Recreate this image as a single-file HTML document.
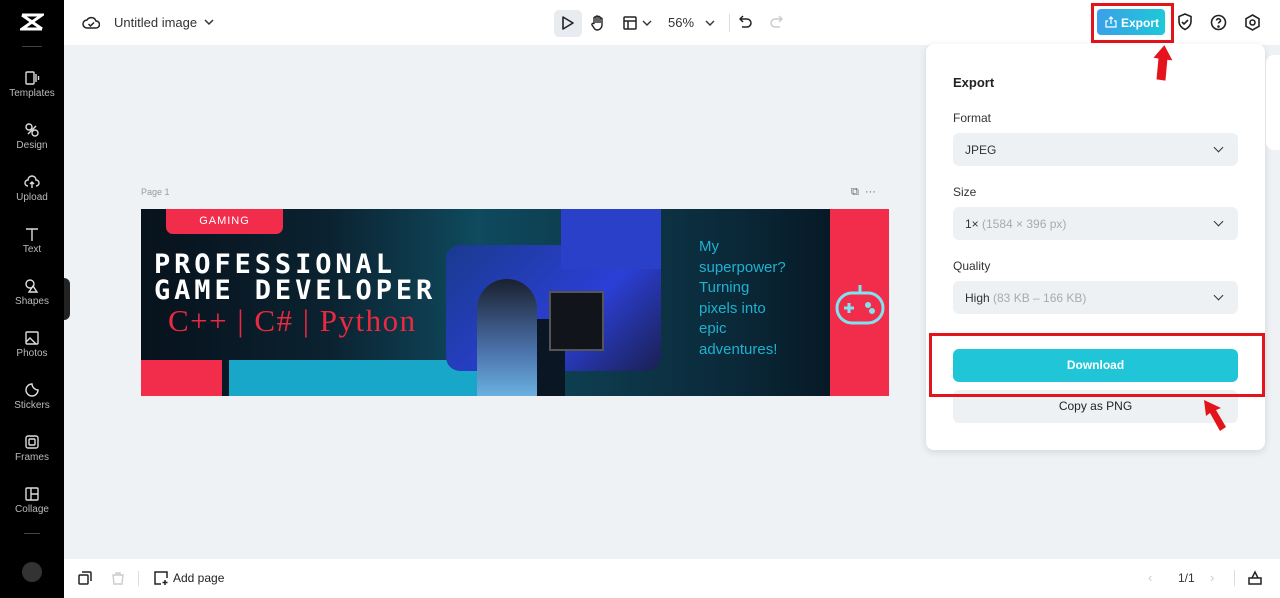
<!DOCTYPE html><html><head><meta charset="utf-8"><style>
*{box-sizing:border-box;margin:0;padding:0}
body{width:1280px;height:598px;overflow:hidden;background:#eff2f5;font-family:"Liberation Sans",sans-serif;position:relative;color:#222}
.a{position:absolute}
.side{left:0;top:0;width:64px;height:598px;background:#000}
.si{position:absolute;left:0;width:64px;text-align:center;color:#bbb;font-size:10px}
.si svg{display:block;margin:0 auto 2px}
.top{left:64px;top:0;width:1216px;height:45px;background:#fff}
.bot{left:64px;top:559px;width:1216px;height:39px;background:#fff}
.panel{left:926px;top:44px;width:339px;height:406px;background:#fff;border-radius:8px;box-shadow:0 2px 8px rgba(0,0,0,.12)}
.lbl{position:absolute;left:27px;font-size:12px;color:#333}
.sel{position:absolute;left:27px;width:285px;height:33px;background:#eef1f4;border-radius:6px;font-size:12px;color:#333;padding:10px 12px}
.sel span{color:#aaa}
.sel:after{content:"";position:absolute;right:16px;top:11px;width:6px;height:6px;border-right:1.6px solid #333;border-bottom:1.6px solid #333;transform:rotate(45deg)}
</style></head><body>
<div class="a side">
 <svg class="a" style="left:20px;top:13px" width="24" height="18" viewBox="0 0 24 18"><path d="M2 2h20L2 16h20M2 2l20 14" stroke="#fff" stroke-width="3" fill="none"/></svg>
 <div class="a" style="left:22px;top:46px;width:20px;height:1px;background:#444"></div>
 <div class="si" style="top:70px"><svg width="16" height="16" viewBox="0 0 16 16" fill="none" stroke="#ddd" stroke-width="1.4"><rect x="2" y="2" width="8" height="12" rx="1"/><path d="M12 4v8M14.5 6v4"/></svg>Templates</div>
 <div class="si" style="top:122px"><svg width="16" height="16" viewBox="0 0 16 16" fill="none" stroke="#ddd" stroke-width="1.4"><circle cx="5" cy="5" r="3"/><circle cx="11" cy="11" r="3"/><path d="M4 12l8-8"/></svg>Design</div>
 <div class="si" style="top:174px"><svg width="16" height="16" viewBox="0 0 16 16" fill="none" stroke="#ddd" stroke-width="1.4"><path d="M4 12a3 3 0 010-6 4 4 0 018 0 3 3 0 010 6M8 8v6M6 10l2-2 2 2"/></svg>Upload</div>
 <div class="si" style="top:226px"><svg width="16" height="16" viewBox="0 0 16 16" fill="none" stroke="#ddd" stroke-width="1.4"><path d="M2 3h12M8 3v12"/></svg>Text</div>
 <div class="si" style="top:278px"><svg width="16" height="16" viewBox="0 0 16 16" fill="none" stroke="#ddd" stroke-width="1.4"><circle cx="6" cy="6" r="4"/><path d="M9 8l4 6H5z"/></svg>Shapes</div>
 <div class="si" style="top:330px"><svg width="16" height="16" viewBox="0 0 16 16" fill="none" stroke="#ddd" stroke-width="1.4"><rect x="2" y="2" width="12" height="12" rx="1"/><path d="M2 12l4-4 6 6"/></svg>Photos</div>
 <div class="si" style="top:382px"><svg width="16" height="16" viewBox="0 0 16 16" fill="none" stroke="#ddd" stroke-width="1.4"><path d="M14 8A6 6 0 118 2c0 3 3 6 6 6z"/></svg>Stickers</div>
 <div class="si" style="top:434px"><svg width="16" height="16" viewBox="0 0 16 16" fill="none" stroke="#ddd" stroke-width="1.4"><rect x="2" y="2" width="12" height="12" rx="2"/><rect x="5" y="5" width="6" height="6" rx="1"/></svg>Frames</div>
 <div class="si" style="top:486px"><svg width="16" height="16" viewBox="0 0 16 16" fill="none" stroke="#ddd" stroke-width="1.4"><rect x="2" y="2" width="12" height="12" rx="1"/><path d="M7 2v12M7 8h7"/></svg>Collage</div>
 <div class="a" style="left:24px;top:533px;width:16px;height:1px;background:#444"></div>
 <div class="a" style="left:22px;top:562px;width:20px;height:20px;border-radius:50%;background:#333"></div>
 <div class="a" style="left:64px;top:278px;width:6px;height:42px;background:#222;border-radius:0 6px 6px 0"></div>
</div>
<div class="a top">
 <svg class="a" style="left:18px;top:14px" width="18" height="16" viewBox="0 0 18 16" fill="none" stroke="#222" stroke-width="1.5"><path d="M5 14a4 4 0 010-8 5 5 0 019 1 3.5 3.5 0 010 7z"/><path d="M6.5 10l2 2 3.5-3.5"/></svg>
 <div class="a" style="left:50px;top:15px;font-size:13px;color:#333">Untitled image</div>
 <svg class="a" style="left:140px;top:18px" width="10" height="8"><path d="M1 2l4 4 4-4" stroke="#333" stroke-width="1.5" fill="none"/></svg>
 <div class="a" style="left:490px;top:10px;width:28px;height:27px;background:#e8ecf0;border-radius:5px"></div>
 <svg class="a" style="left:497px;top:15px" width="14" height="16"><path d="M2 2l10 6-10 6z" stroke="#222" stroke-width="1.6" fill="none" stroke-linejoin="round"/></svg>
 <svg class="a" style="left:526px;top:14px" width="16" height="18" viewBox="0 0 16 18" fill="none" stroke="#222" stroke-width="1.4"><path d="M4 10V4a1 1 0 012 0v5V3a1 1 0 012 0v6V3.5a1 1 0 012 0V9V5a1 1 0 012 0v6a5 5 0 01-5 5H7a4 4 0 01-3-2l-2-3a1 1 0 012-1z"/></svg>
 <svg class="a" style="left:559px;top:16px" width="14" height="14" fill="none" stroke="#222" stroke-width="1.5"><rect x="1" y="1" width="12" height="12" rx="1"/><path d="M1 5h12M5 5v8"/></svg>
 <svg class="a" style="left:578px;top:20px" width="10" height="7"><path d="M1 1l4 4 4-4" stroke="#333" stroke-width="1.4" fill="none"/></svg>
 <div class="a" style="left:604px;top:15px;font-size:13px;color:#333">56%</div>
 <svg class="a" style="left:641px;top:20px" width="10" height="7"><path d="M1 1l4 4 4-4" stroke="#333" stroke-width="1.4" fill="none"/></svg>
 <div class="a" style="left:665px;top:14px;width:1px;height:18px;background:#ddd"></div>
 <svg class="a" style="left:675px;top:15px" width="14" height="14" fill="none" stroke="#222" stroke-width="1.5"><path d="M4 1L1 4l3 3M1 4h7a4 4 0 010 8H3"/></svg>
 <svg class="a" style="left:705px;top:15px" width="14" height="14" fill="none" stroke="#ccc" stroke-width="1.5"><path d="M10 1l3 3-3 3M13 4H6a4 4 0 000 8h5"/></svg>
 <div class="a" style="left:1033px;top:9px;width:68px;height:26px;background:linear-gradient(90deg,#3aa0ea,#1ec8d8);border-radius:4px;color:#fff;font-size:12px;font-weight:bold;padding:7px 0 0 24px">Export</div>
 <svg class="a" style="left:1041px;top:16px" width="12" height="12" fill="none" stroke="#fff" stroke-width="1.2"><path d="M3 5H1v6h10V5H9M6 8V1M4 3l2-2 2 2"/></svg>
 <div class="a" style="left:1027px;top:3px;width:83px;height:40px;border:3px solid #e3141c"></div>
 <svg class="a" style="left:1113px;top:13px" width="16" height="18" fill="none" stroke="#222" stroke-width="1.6"><path d="M8 1l6 2.5v5c0 4-3 6.5-6 8-3-1.5-6-4-6-8v-5z"/><path d="M5 9l2 2 4-4"/></svg>
 <svg class="a" style="left:1146px;top:14px" width="17" height="17" fill="none" stroke="#222" stroke-width="1.6"><circle cx="8.5" cy="8.5" r="7"/><path d="M6.5 6.5a2 2 0 114 .5c-.5 1-2 1.2-2 2.5"/><circle cx="8.5" cy="12.5" r=".5" fill="#222"/></svg>
 <svg class="a" style="left:1180px;top:14px" width="17" height="17" fill="none" stroke="#222" stroke-width="1.6"><path d="M8.5 1l6.5 3.7v7.6L8.5 16 2 12.3V4.7z"/><circle cx="8.5" cy="8.5" r="2.5"/></svg>
</div>
<div class="a" style="left:141px;top:187px;font-size:9px;color:#999">Page 1</div>
<div class="a" style="left:851px;top:186px;font-size:11px;color:#666">⧉ &nbsp;···</div>
<div class="a" style="left:141px;top:209px;width:748px;height:187px;background:linear-gradient(90deg,#07121c 0%,#0b2230 25%,#0f4a5e 45%,#0a2838 80%,#05101a 100%);overflow:hidden">
 <div class="a" style="left:25px;top:0;width:117px;height:25px;background:#f22d4b;border-radius:0 0 7px 7px;color:#fff;font-size:11px;text-align:center;line-height:24px;letter-spacing:1px">GAMING</div>
 <div class="a" style="left:13px;top:43px;color:#fff;font-family:'DejaVu Sans Mono',monospace;font-weight:bold;font-size:27px;line-height:26px;letter-spacing:3.9px">PROFESSIONAL<br>GAME DEVELOPER</div>
 <div class="a" style="left:27px;top:94px;color:#ea2a40;font-family:'Liberation Serif',serif;font-size:31px;letter-spacing:1.5px">C++ | C# | Python</div>
 <div class="a" style="left:0;top:151px;width:81px;height:36px;background:#f22d4b"></div>
 <div class="a" style="left:88px;top:151px;width:270px;height:36px;background:#18a6c9;border-radius:0 14px 0 0"></div>
 <div class="a" style="left:305px;top:36px;width:215px;height:126px;background:linear-gradient(135deg,#1a3a8e,#2b3fd6 60%,#1a2050);border-radius:14px"></div>
 <div class="a" style="left:420px;top:0;width:100px;height:60px;background:#2a40c8"></div>
 <div class="a" style="left:362px;top:110px;width:62px;height:77px;background:#0a1624"></div>
 <div class="a" style="left:336px;top:70px;width:60px;height:117px;background:linear-gradient(180deg,#1a2030,#4a70a8 60%,#6ab0e0);border-radius:30px 30px 0 0"></div>
 <div class="a" style="left:408px;top:82px;width:55px;height:60px;background:#12141c;border:2px solid #555"></div>
 <div class="a" style="left:558px;top:28px;color:#1fb1cf;font-size:15px;line-height:20.5px">My<br>superpower?<br>Turning<br>pixels into<br>epic<br>adventures!</div>
 <div class="a" style="left:689px;top:0;width:59px;height:187px;background:#f22d4b"></div>
 <svg class="a" style="left:693px;top:74px" width="52" height="44" fill="none" stroke="#7fe3f0" stroke-width="3"><rect x="3" y="10" width="46" height="30" rx="15"/><path d="M26 2v8M10 25h10M15 20v10"/><circle cx="34" cy="22" r="1.5"/><circle cx="38" cy="28" r="1.5"/></svg>
</div>
<div class="a panel">
 <div class="a" style="left:27px;top:31px;font-size:13px;font-weight:bold;color:#222">Export</div>
 <div class="lbl" style="top:67px">Format</div>
 <div class="sel" style="top:89px">JPEG</div>
 <div class="lbl" style="top:141px">Size</div>
 <div class="sel" style="top:163px">1× <span>(1584 × 396 px)</span></div>
 <div class="lbl" style="top:215px">Quality</div>
 <div class="sel" style="top:237px">High <span>(83 KB – 166 KB)</span></div>
 <div class="a" style="left:27px;top:305px;width:285px;height:33px;background:#20c5d8;border-radius:6px;color:#fff;font-size:12px;font-weight:bold;text-align:center;line-height:33px">Download</div>
 <div class="a" style="left:27px;top:346px;width:285px;height:33px;background:#eef1f4;border-radius:6px;color:#222;font-size:12px;text-align:center;line-height:33px;padding-bottom:12px">Copy as PNG</div>
</div>
<svg class="a" style="left:1151px;top:44px" width="22" height="38"><path d="M11 1L2 15h5l1 21h9l-1-21h5z" fill="#e3141c" transform="rotate(8 11 18)"/></svg>
<div class="a" style="left:929px;top:333px;width:336px;height:64px;border:3px solid #e3141c"></div>
<svg class="a" style="left:1200px;top:398px" width="30" height="36"><path d="M4 2l2 16 4-3 10 18 6-4-10-17 5-2z" fill="#e3141c"/></svg>
<div class="a" style="left:1266px;top:55px;width:14px;height:95px;background:#fff;border-radius:8px 0 0 8px"></div>
<div class="a bot">
 <svg class="a" style="left:14px;top:12px" width="14" height="14" fill="none" stroke="#222" stroke-width="1.5"><rect x="1" y="4" width="9" height="9" rx="1"/><path d="M4 1h8a1 1 0 011 1v8"/></svg>
 <svg class="a" style="left:47px;top:12px" width="14" height="14" fill="none" stroke="#ccc" stroke-width="1.4"><path d="M2 4h10l-1 9H3zM5 4V2h4v2"/></svg>
 <div class="a" style="left:74px;top:12px;width:1px;height:15px;background:#ddd"></div>
 <svg class="a" style="left:89px;top:11px" width="16" height="16" fill="none" stroke="#222" stroke-width="1.5"><path d="M8 14H2V2h12v6M12 10v5M9.5 12.5h5"/></svg>
 <div class="a" style="left:109px;top:12px;font-size:12px;color:#222">Add page</div>
 <div class="a" style="left:1084px;top:11px;font-size:13px;color:#ccc">‹</div>
 <div class="a" style="left:1114px;top:12px;font-size:12px;color:#333">1/1</div>
 <div class="a" style="left:1146px;top:11px;font-size:13px;color:#ccc">›</div>
 <div class="a" style="left:1170px;top:11px;width:1px;height:16px;background:#ddd"></div>
 <svg class="a" style="left:1183px;top:11px" width="16" height="16" fill="none" stroke="#222" stroke-width="1.5"><path d="M2 14V8h12v6zM5 8l3-6 3 6"/></svg>
</div>
</body></html>
